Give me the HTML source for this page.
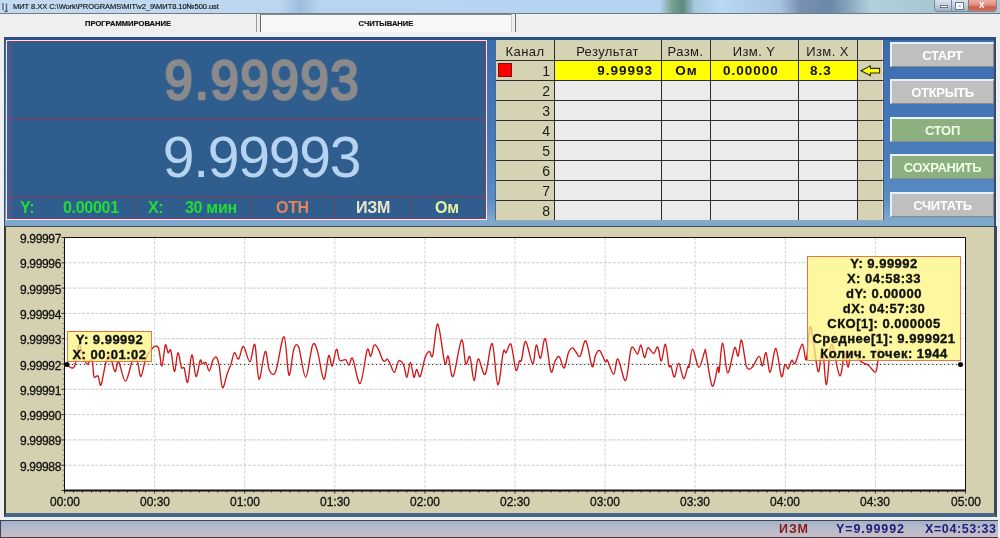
<!DOCTYPE html>
<html><head><meta charset="utf-8">
<style>
*{margin:0;padding:0;box-sizing:border-box}
.a{will-change:transform}
html,body{width:1000px;height:538px;overflow:hidden;background:#eef0ef;font-family:"Liberation Sans",sans-serif;position:relative}
.a{position:absolute}
#title{left:0;top:0;width:1000px;height:14px;background:linear-gradient(90deg,#c4daf0 0%,#bcd6f0 28%,#9cbcdc 30%,#b8d4f0 32%,#b4d4f2 66%,#7aa090 67.2%,#5a8a80 68.3%,#a8c8e0 69.5%,#b8d8f4 72%,#a8c4e0 78%,#7890b0 80%,#6a88a8 83%,#8aa8c0 85%,#b0d0dc 87%,#a8c8d0 93%,#b0c8d8 100%);border-bottom:1px solid #6c7c88}
#title .t{left:13px;top:2px;font-size:7.5px;color:#111;-webkit-text-stroke:0.15px #111;white-space:nowrap;letter-spacing:-0.05px}
#tabs{left:0;top:14px;width:1000px;height:23px;background:#efefef}
.tab{top:0;height:18px;font-size:7.6px;font-weight:bold;color:#111;-webkit-text-stroke:0.2px #111;text-align:center;line-height:19px}
#main{left:4px;top:37px;width:992px;height:190px;background:linear-gradient(180deg,#3a6cb0 0%,#4a7cbc 60%,#5a8cc4 85%,#7ea8cc 96%,#7ea8cc 100%);border-top:3px solid #2a4e86;border-right:2px solid #3a4a6a;border-left:1px solid #3c4c70}
#disp{left:6px;top:40px;width:481px;height:180px;background:#2f5e8e;border:1px solid #f4e8f4;}
#disp .in{left:0;top:0;width:479px;height:178px;border:1px solid #8a3a5a;border-left:5px solid #4a5a8a}
.big1{font-weight:normal;-webkit-text-stroke:2.7px #8c8a8a;font-size:55px;letter-spacing:2px;color:#8c8a8a;text-align:center;width:100%;left:0;transform:scaleX(0.92);transform-origin:262px 0}
.big2{font-size:57px;letter-spacing:-1.2px;color:#b6d4f2;text-align:center;width:100%;left:0}
.info{font-size:16px;letter-spacing:-0.3px;font-weight:bold;top:198px;line-height:20px}
#tbl{left:495px;top:40px;width:389px;height:181px;background:#d6d2b4;border-left:1px solid #4a6a90;border-bottom:1px solid #9aa8b0;border-right:1px solid #505a70;box-shadow:inset -1px 0 0 #e8e8e0}
.hl{background:#2c2c2c;height:1px}
.vl{background:#2c2c2c;width:1px}
.th{font-size:13px;letter-spacing:0.4px;color:#1a1a1a;top:44px;text-align:center}
.rv{font-size:13.5px;letter-spacing:1px;font-weight:bold;color:#111;top:63px}
.rn{font-size:14px;color:#1a1a1a;text-align:right;width:20px}
.btn{left:890px;width:104px;height:25px;background:#bfbfbf;border-top:2px solid #eaf0f8;border-left:2px solid #eaf0f8;border-right:1px solid #8a8a8a;border-bottom:1px solid #8a8a8a;color:#fff;font-weight:bold;font-size:13px;letter-spacing:-0.3px;text-align:center;line-height:23px}
.btn.g{background:#8cb080;color:#f0ffe8}
#chart{left:4px;top:226px;width:993px;height:291px;background:#d4d0b0;border-top:1px solid #404850;border-left:2px solid #3a3a3a;border-right:3px solid #3a4a5a;border-bottom:4px solid #46668c}
#plot{left:64px;top:237px;width:901px;height:253px;background:#fff;border-left:1px solid #000;border-top:1px solid #000;border-right:1px solid #000;border-bottom:2px solid #000}
.yl{font-size:12px;color:#111;text-align:right;width:50px;left:11px;letter-spacing:-0.35px;-webkit-text-stroke:0.3px #111}
.tipb{background:#fdf8a0;border:1px solid #e07848}
.tip{font-size:13px;font-weight:bold;color:#111;text-align:center;line-height:15px;letter-spacing:0.5px;-webkit-text-stroke:0.35px #111}
.xl{font-size:12px;color:#111;text-align:center;width:50px;-webkit-text-stroke:0.3px #111}
#status{left:0;top:520px;width:998px;height:18px;background:linear-gradient(180deg,#a4b2c8 0%,#b8bccc 50%,#cabcc4 100%);border-top:1px solid #3a4458;border-left:1px solid #3a4458;border-bottom:1px solid #4a3a48}
.st{font-weight:bold;font-size:12.5px;top:522px;letter-spacing:0.9px}
</style></head><body>
<div id="title" class="a"><svg class="a" style="left:1px;top:2px" width="10" height="10"><path d="M2 1V8M5.5 1.5V9M3 9.5H7" stroke="#3a4658" stroke-width="1.3" fill="none" opacity="0.8"/></svg><div class="t a">МИТ 8.XX C:\Work\PROGRAMS\МIT\v2_9\МИТ8.10№500.ust</div></div>
<div class="a" style="left:934px;top:0;width:63px;height:12px;border:1px solid #7a8a9a;border-top:none;border-radius:0 0 4px 4px;background:linear-gradient(180deg,#d8e4ee 0%,#c0d0de 50%,#9cb0c2 100%);overflow:hidden">
<div class="a" style="left:16px;top:0;width:1px;height:12px;background:#7a8a9a"></div>
<div class="a" style="left:33px;top:0;width:29px;height:12px;background:linear-gradient(180deg,#eab0a4 0%,#e09080 40%,#d05a48 60%,#d87868 100%);border-left:1px solid #8a7a7a"></div>
<div class="a" style="left:5px;top:5px;width:8px;height:3px;background:#fff;border:1px solid #6a7888"></div>
<div class="a" style="left:21px;top:3px;width:7px;height:6px;border:2px solid #fff;box-shadow:0 0 0 1px #6a7888"></div>
<div class="a" style="left:44px;top:-1px;font-size:10px;font-weight:bold;color:#fff;line-height:12px">x</div>
</div>
<div id="tabs" class="a">
  <div class="tab a" style="left:0;width:257px;border-right:1px solid #9a9a9a">ПРОГРАММИРОВАНИЕ</div>
  <div class="tab a" style="left:260px;width:252px;background:#f8f8f8;border-left:1px solid #6a6a6a;border-right:1px solid #c8c8c8;border-top:1px solid #8a8a8a;line-height:17px">СЧИТЫВАНИЕ</div>
  <div class="a" style="left:515px;top:0;width:1px;height:18px;background:#6a6a6a"></div>
</div>
<div id="main" class="a"></div>
<div id="disp" class="a"><div class="in a"></div></div>
<div class="a" style="left:7px;top:119px;width:479px;height:1px;background:#8a3a5a"></div>
<div class="a" style="left:7px;top:197px;width:479px;height:1px;background:#8a3a5a"></div>
<div class="a" style="left:134px;top:198px;width:1px;height:20px;background:#7a3a60"></div>
<div class="a" style="left:250px;top:198px;width:1px;height:20px;background:#7a3a60"></div>
<div class="a" style="left:334px;top:198px;width:1px;height:20px;background:#7a3a60"></div>
<div class="a" style="left:410px;top:198px;width:1px;height:20px;background:#7a3a60"></div>
<div class="a big1" style="left:1px;top:48px;width:523px;">9.99993</div>
<div class="a big2" style="left:0;top:124px;width:523px;">9.99993</div>
<div class="a info" style="left:20px;color:#22dd33">Y:</div>
<div class="a info" style="left:63px;color:#22dd33">0.00001</div>
<div class="a info" style="left:148px;color:#22dd33">X:</div>
<div class="a info" style="left:185px;color:#22dd33">30 мин</div>
<div class="a info" style="left:276px;color:#e8845c">ОТН</div>
<div class="a info" style="left:356px;color:#efe6c8">ИЗМ</div>
<div class="a info" style="left:435px;color:#e6f0a0">Ом</div>
<div id="tbl" class="a"></div>
<div class="a" style="left:555px;top:61px;width:302px;height:19px;background:#ffff00"></div>
<div class="a" style="left:555px;top:81px;width:302px;height:139px;background:#ebebeb"></div>
<div class="a hl" style="left:496px;top:60px;width:387px"></div>
<div class="a hl" style="left:496px;top:80px;width:387px"></div>
<div class="a hl" style="left:496px;top:100px;width:387px"></div>
<div class="a hl" style="left:496px;top:120px;width:387px"></div>
<div class="a hl" style="left:496px;top:140px;width:387px"></div>
<div class="a hl" style="left:496px;top:160px;width:387px"></div>
<div class="a hl" style="left:496px;top:180px;width:387px"></div>
<div class="a hl" style="left:496px;top:200px;width:387px"></div>
<div class="a vl" style="left:554px;top:40px;height:180px"></div>
<div class="a vl" style="left:661px;top:40px;height:180px"></div>
<div class="a vl" style="left:710px;top:40px;height:180px"></div>
<div class="a vl" style="left:798px;top:40px;height:180px"></div>
<div class="a vl" style="left:857px;top:40px;height:180px"></div>
<div class="a th" style="left:496px;width:58px">Канал</div>
<div class="a th" style="left:554px;width:107px">Результат</div>
<div class="a th" style="left:661px;width:49px">Разм.</div>
<div class="a th" style="left:710px;width:88px">Изм. Y</div>
<div class="a th" style="left:798px;width:59px">Изм. X</div>
<div class="a rn" style="left:530px;top:63px">1</div>
<div class="a rn" style="left:530px;top:83px">2</div>
<div class="a rn" style="left:530px;top:103px">3</div>
<div class="a rn" style="left:530px;top:123px">4</div>
<div class="a rn" style="left:530px;top:143px">5</div>
<div class="a rn" style="left:530px;top:163px">6</div>
<div class="a rn" style="left:530px;top:183px">7</div>
<div class="a rn" style="left:530px;top:203px">8</div>
<div class="a" style="left:498px;top:63px;width:14px;height:14px;background:#ff0000;border:1px solid #801010"></div>
<div class="a rv" style="left:556px;width:97px;text-align:right">9.99993</div>
<div class="a rv" style="left:662px;width:49px;text-align:center">Ом</div>
<div class="a rv" style="left:723px">0.00000</div>
<div class="a rv" style="left:810px">8.3</div>
<svg class="a" style="left:855px;top:58px" width="35" height="24" viewBox="0 0 35 24"><path d="M6 12.7 L15.4 7.8 V10.4 H24.6 V15 H15.4 V17.6 Z" fill="#ffff00" stroke="#2a2a1a" stroke-width="1.1" stroke-linejoin="miter"/></svg>
<div class="a btn" style="top:42px">СТАРТ</div>
<div class="a btn" style="top:79px">ОТКРЫТЬ</div>
<div class="a btn g" style="top:117px">СТОП</div>
<div class="a btn g" style="top:154px">СОХРАНИТЬ</div>
<div class="a btn" style="top:192px">СЧИТАТЬ</div>
<div id="chart" class="a"></div>
<svg class="a" style="left:0;top:0" width="1000" height="538" viewBox="0 0 1000 538">
<rect x="64" y="237" width="901" height="253" fill="#fff"/>
<path d="M64 262.8H965 M64 288.1H965 M64 313.4H965 M64 338.7H965 M64 364.0H965 M64 389.3H965 M64 414.6H965 M64 439.9H965 M64 465.2H965 " stroke="#c8c8c8" stroke-width="1" stroke-dasharray="3 1.5" fill="none"/><path d="M154.6 237V490 M244.7 237V490 M334.8 237V490 M424.9 237V490 M515.0 237V490 M605.1 237V490 M695.2 237V490 M785.3 237V490 M875.4 237V490" stroke="#d4d4d4" stroke-width="1" stroke-dasharray="3 1.5" fill="none"/>
<path d="M61.5 237.5H64 M61.5 262.8H64 M61.5 288.1H64 M61.5 313.4H64 M61.5 338.7H64 M61.5 364.0H64 M61.5 389.3H64 M61.5 414.6H64 M61.5 439.9H64 M61.5 465.2H64 M61.5 490.5H64 M64.5 490V493.5 M73.5 490V492.5 M82.5 490V492.5 M91.5 490V492.5 M100.5 490V492.5 M109.5 490V492.5 M118.6 490V492.5 M127.6 490V492.5 M136.6 490V492.5 M145.6 490V492.5 M154.6 490V493.5 M163.6 490V492.5 M172.6 490V492.5 M181.6 490V492.5 M190.6 490V492.5 M199.6 490V492.5 M208.7 490V492.5 M217.7 490V492.5 M226.7 490V492.5 M235.7 490V492.5 M244.7 490V493.5 M253.7 490V492.5 M262.7 490V492.5 M271.7 490V492.5 M280.7 490V492.5 M289.8 490V492.5 M298.8 490V492.5 M307.8 490V492.5 M316.8 490V492.5 M325.8 490V492.5 M334.8 490V493.5 M343.8 490V492.5 M352.8 490V492.5 M361.8 490V492.5 M370.8 490V492.5 M379.8 490V492.5 M388.9 490V492.5 M397.9 490V492.5 M406.9 490V492.5 M415.9 490V492.5 M424.9 490V493.5 M433.9 490V492.5 M442.9 490V492.5 M451.9 490V492.5 M460.9 490V492.5 M469.9 490V492.5 M479.0 490V492.5 M488.0 490V492.5 M497.0 490V492.5 M506.0 490V492.5 M515.0 490V493.5 M524.0 490V492.5 M533.0 490V492.5 M542.0 490V492.5 M551.0 490V492.5 M560.0 490V492.5 M569.1 490V492.5 M578.1 490V492.5 M587.1 490V492.5 M596.1 490V492.5 M605.1 490V493.5 M614.1 490V492.5 M623.1 490V492.5 M632.1 490V492.5 M641.1 490V492.5 M650.1 490V492.5 M659.2 490V492.5 M668.2 490V492.5 M677.2 490V492.5 M686.2 490V492.5 M695.2 490V493.5 M704.2 490V492.5 M713.2 490V492.5 M722.2 490V492.5 M731.2 490V492.5 M740.2 490V492.5 M749.3 490V492.5 M758.3 490V492.5 M767.3 490V492.5 M776.3 490V492.5 M785.3 490V493.5 M794.3 490V492.5 M803.3 490V492.5 M812.3 490V492.5 M821.3 490V492.5 M830.3 490V492.5 M839.4 490V492.5 M848.4 490V492.5 M857.4 490V492.5 M866.4 490V492.5 M875.4 490V493.5 M884.4 490V492.5 M893.4 490V492.5 M902.4 490V492.5 M911.4 490V492.5 M920.4 490V492.5 M929.5 490V492.5 M938.5 490V492.5 M947.5 490V492.5 M956.5 490V492.5 M965.5 490V493.5" stroke="#303030" stroke-width="1" fill="none"/><path d="M62.5 242.6H64 M62.5 247.6H64 M62.5 252.7H64 M62.5 257.7H64 M62.5 267.9H64 M62.5 272.9H64 M62.5 278.0H64 M62.5 283.0H64 M62.5 293.2H64 M62.5 298.2H64 M62.5 303.3H64 M62.5 308.3H64 M62.5 318.5H64 M62.5 323.5H64 M62.5 328.6H64 M62.5 333.6H64 M62.5 343.8H64 M62.5 348.8H64 M62.5 353.9H64 M62.5 358.9H64 M62.5 369.1H64 M62.5 374.1H64 M62.5 379.2H64 M62.5 384.2H64 M62.5 394.4H64 M62.5 399.4H64 M62.5 404.5H64 M62.5 409.5H64 M62.5 419.7H64 M62.5 424.7H64 M62.5 429.8H64 M62.5 434.8H64 M62.5 445.0H64 M62.5 450.0H64 M62.5 455.1H64 M62.5 460.1H64 M62.5 470.3H64 M62.5 475.3H64 M62.5 480.4H64 M62.5 485.4H64" stroke="#8a8670" stroke-width="1" fill="none"/>
<path d="M64 364.5H961" stroke="#383838" stroke-width="1" stroke-dasharray="1.2 2.8" fill="none"/>
<path d="M64.0 364.0 C64.7 364.3 66.7 365.3 68.0 366.0 C69.3 366.7 70.8 368.2 72.0 368.0 C73.2 367.8 73.8 368.8 75.0 365.0 C76.2 361.2 77.7 346.5 79.0 345.0 C80.3 343.5 81.7 352.8 83.0 356.0 C84.3 359.2 85.5 363.3 87.0 364.0 C88.5 364.7 90.8 357.9 92.0 360.0 C93.2 362.1 93.0 373.8 94.0 376.5 C95.0 379.2 96.8 374.6 98.0 376.0 C99.2 377.4 99.7 387.3 101.0 385.0 C102.3 382.7 104.5 366.8 106.0 362.0 C107.5 357.2 108.5 354.4 110.0 356.0 C111.5 357.6 113.6 370.6 115.0 371.6 C116.4 372.6 116.8 360.2 118.6 361.8 C120.3 363.4 123.2 381.6 125.5 381.4 C127.8 381.2 130.5 363.7 132.5 360.4 C134.5 357.1 136.0 359.1 137.4 361.8 C138.8 364.5 139.5 377.0 140.9 376.5 C142.3 376.0 143.8 363.8 145.8 359.0 C147.8 354.2 150.6 349.8 152.7 347.9 C154.8 346.0 156.9 344.9 158.4 347.9 C159.9 350.9 160.8 366.5 161.9 366.0 C163.1 365.5 164.3 347.3 165.3 345.1 C166.3 342.9 167.2 351.9 168.1 352.8 C169.0 353.7 169.8 347.6 170.9 350.7 C172.0 353.8 173.2 371.2 174.4 371.6 C175.6 372.0 176.7 353.5 177.9 352.8 C179.1 352.1 180.4 364.8 181.4 367.4 C182.4 369.9 183.1 365.7 184.2 368.1 C185.2 370.6 186.4 384.3 187.7 382.1 C189.0 379.9 190.4 355.8 191.8 354.9 C193.2 354.0 194.6 375.6 196.0 376.5 C197.4 377.4 199.1 362.5 200.2 360.4 C201.2 358.3 201.4 363.5 202.3 363.9 C203.2 364.2 204.6 361.3 205.8 362.5 C207.0 363.7 208.1 371.2 209.3 370.9 C210.5 370.5 211.7 362.7 212.8 360.4 C214.0 358.1 215.2 356.3 216.2 357.0 C217.2 357.7 217.9 359.5 219.0 364.6 C220.1 369.7 221.1 386.2 222.5 387.6 C223.9 389.0 226.0 376.8 227.4 373.0 C228.8 369.2 229.7 368.0 230.9 364.6 C232.1 361.2 233.1 353.7 234.4 352.8 C235.7 351.9 237.1 360.1 238.6 359.0 C240.1 357.9 241.5 346.0 243.4 346.5 C245.3 347.0 248.0 362.2 249.9 361.8 C251.8 361.4 253.3 341.5 254.8 344.4 C256.3 347.3 257.3 378.1 259.0 379.3 C260.7 380.5 263.5 352.9 265.2 351.4 C266.9 349.9 267.6 366.8 269.4 370.2 C271.1 373.6 273.3 377.2 275.7 371.6 C278.1 366.0 281.8 336.1 284.0 336.7 C286.2 337.3 287.3 373.0 288.9 375.1 C290.5 377.2 292.2 354.0 293.8 349.3 C295.4 344.6 296.7 342.6 298.7 347.2 C300.7 351.8 303.4 377.5 305.7 377.2 C308.0 376.9 310.6 349.4 312.6 345.1 C314.6 340.8 315.6 345.7 317.5 351.4 C319.4 357.1 321.9 378.6 323.8 379.3 C325.7 380.0 327.3 357.8 328.7 355.6 C330.1 353.4 330.9 367.1 332.2 366.0 C333.5 364.9 335.1 350.2 336.4 349.3 C337.7 348.4 338.3 358.7 339.8 360.4 C341.3 362.1 344.1 358.9 345.6 359.7 C347.2 360.5 347.9 365.5 349.1 365.3 C350.3 365.1 350.8 355.4 352.6 358.4 C354.5 361.4 357.8 384.9 360.2 383.5 C362.6 382.1 365.4 354.5 367.2 350.0 C368.9 345.5 369.5 357.1 370.7 356.3 C371.9 355.5 372.9 346.3 374.2 345.1 C375.5 343.9 377.0 346.9 378.4 349.3 C379.8 351.7 381.4 357.7 382.5 359.7 C383.6 361.7 384.5 361.2 385.3 361.1 C386.1 361.0 386.6 358.5 387.4 359.0 C388.2 359.5 389.0 361.8 390.2 364.0 C391.4 366.2 393.0 372.8 394.4 372.3 C395.8 371.8 397.1 362.4 398.6 361.1 C400.1 359.8 402.1 361.9 403.5 364.6 C404.9 367.3 405.8 377.6 406.9 377.2 C408.0 376.8 409.2 362.5 410.4 362.5 C411.6 362.5 412.8 376.0 413.9 377.2 C414.9 378.4 415.6 369.6 416.7 369.5 C417.8 369.4 418.8 378.5 420.2 376.5 C421.6 374.5 423.6 361.9 425.1 357.7 C426.6 353.5 428.0 351.8 429.3 351.4 C430.6 351.0 431.3 360.2 432.7 355.6 C434.1 351.1 435.8 322.9 437.8 324.1 C439.8 325.4 443.1 357.8 444.8 363.1 C446.5 368.4 446.8 353.9 448.2 356.1 C449.6 358.3 450.9 379.1 453.1 376.4 C455.3 373.7 459.4 342.2 461.5 340.1 C463.6 338.0 464.3 361.0 465.7 363.8 C467.1 366.6 468.5 354.0 469.9 356.8 C471.3 359.6 472.7 380.2 474.1 380.6 C475.5 381.0 476.4 359.9 478.2 358.9 C480.0 357.8 482.9 376.9 485.2 374.3 C487.5 371.8 490.1 341.9 492.2 343.6 C494.3 345.3 495.9 383.3 497.8 384.7 C499.7 386.1 501.9 357.3 503.3 352.0 C504.7 346.7 504.8 354.0 506.1 352.7 C507.4 351.4 509.4 341.4 511.0 344.3 C512.6 347.2 514.5 367.3 515.9 370.1 C517.3 372.9 518.5 362.6 519.4 361.0 C520.3 359.4 520.5 363.6 521.5 360.3 C522.5 357.1 523.9 340.9 525.7 341.5 C527.6 342.1 530.8 363.2 532.6 363.8 C534.4 364.4 535.0 345.9 536.3 345.0 C537.6 344.1 539.0 359.2 540.5 358.2 C542.0 357.1 543.6 336.5 545.3 338.7 C547.0 340.9 549.3 367.8 550.9 371.5 C552.5 375.2 553.7 363.4 555.1 361.0 C556.5 358.6 557.8 355.6 559.3 356.8 C560.8 358.0 562.7 368.7 564.2 368.0 C565.7 367.3 567.0 356.1 568.4 352.7 C569.8 349.3 571.2 347.9 572.5 347.8 C573.8 347.7 574.7 350.6 576.0 352.0 C577.3 353.4 578.6 358.0 580.2 356.1 C581.8 354.2 583.8 339.1 585.8 340.8 C587.8 342.6 590.5 364.2 592.1 366.6 C593.7 369.0 594.2 358.1 595.5 355.4 C596.8 352.7 598.1 349.6 599.7 350.6 C601.3 351.7 604.0 360.1 605.3 361.7 C606.6 363.3 606.0 358.2 607.4 360.3 C608.8 362.4 612.0 374.5 613.7 374.3 C615.5 374.1 615.9 357.8 617.9 358.9 C619.9 359.9 623.4 382.0 625.5 380.6 C627.6 379.2 629.3 356.1 630.6 350.6 C631.9 345.1 632.2 347.2 633.4 347.8 C634.6 348.4 636.3 354.5 637.6 354.0 C638.9 353.5 639.9 344.4 641.0 345.0 C642.1 345.6 643.3 357.0 644.5 357.5 C645.7 358.0 646.5 348.5 648.0 347.8 C649.5 347.1 652.0 353.5 653.6 353.4 C655.2 353.3 656.5 345.8 657.8 347.1 C659.1 348.4 660.0 361.5 661.3 361.0 C662.6 360.5 664.1 343.5 665.4 344.3 C666.7 345.1 668.0 362.3 668.9 365.9 C669.8 369.5 670.1 364.0 671.0 365.9 C671.9 367.8 673.2 377.5 674.5 377.0 C675.8 376.5 677.2 362.9 678.7 363.1 C680.2 363.4 682.1 377.9 683.6 378.5 C685.1 379.1 686.9 368.6 687.8 366.6 C688.7 364.6 688.4 369.5 689.2 366.6 C690.0 363.7 691.0 349.1 692.6 349.2 C694.2 349.3 696.9 366.8 698.9 367.3 C700.9 367.8 703.3 354.4 704.5 352.0 C705.7 349.6 704.6 347.0 705.9 352.7 C707.2 358.4 710.2 383.7 712.2 386.1 C714.2 388.5 716.6 369.7 717.7 367.3 C718.9 364.9 718.3 375.6 719.1 371.5 C719.9 367.4 721.3 342.7 722.7 342.9 C724.1 343.1 725.7 372.1 727.7 372.9 C729.7 373.7 732.9 350.6 734.6 347.8 C736.3 345.0 736.9 357.4 738.1 356.1 C739.3 354.8 740.2 338.4 741.6 340.1 C743.0 341.9 744.8 362.1 746.5 366.6 C748.2 371.1 750.0 369.1 752.1 367.3 C754.2 365.6 757.4 356.3 759.1 356.1 C760.8 355.9 761.4 366.5 762.5 365.9 C763.6 365.3 764.7 351.6 766.0 352.7 C767.3 353.8 768.6 372.9 770.2 372.2 C771.8 371.5 773.9 347.8 775.8 348.5 C777.7 349.2 779.9 373.7 781.4 376.4 C782.9 379.1 783.8 365.8 784.9 364.5 C786.0 363.2 787.1 369.4 788.3 368.7 C789.4 368.0 790.6 361.2 791.8 360.3 C793.0 359.4 793.6 365.8 795.3 363.1 C797.0 360.4 800.4 344.9 802.2 344.3 C804.0 343.7 804.9 362.5 806.3 359.6 C807.7 356.7 808.6 324.9 810.6 326.9 C812.6 328.9 816.2 368.0 818.1 371.5 C820.0 375.0 820.9 345.6 822.3 347.8 C823.7 350.0 825.0 385.3 826.5 384.7 C828.0 384.1 829.2 345.8 831.4 344.3 C833.6 342.8 837.5 374.2 839.7 375.7 C841.9 377.2 843.2 354.8 844.6 353.4 C846.0 352.0 846.9 367.4 848.1 367.3 C849.3 367.2 849.6 353.8 851.6 352.7 C853.6 351.6 857.2 358.9 860.0 361.0 C862.8 363.1 865.6 363.4 868.3 365.2 C871.0 366.9 874.2 374.2 876.0 371.5 C877.8 368.8 878.5 352.8 879.0 349.0" stroke="#d01818" stroke-width="1.35" fill="none" stroke-linejoin="round"/>
<path d="M64.5 237.5H965.5V490M64.5 237V491" stroke="#101010" stroke-width="1" fill="none"/>
<path d="M64 490.5H966" stroke="#101010" stroke-width="2" fill="none"/>
<circle cx="67" cy="364.5" r="2.5" fill="#000"/><circle cx="960.5" cy="364.5" r="2.5" fill="#000"/>

</svg>
<div class="a yl" style="top:232.0px">9.99997</div>
<div class="a yl" style="top:257.3px">9.99996</div>
<div class="a yl" style="top:282.6px">9.99995</div>
<div class="a yl" style="top:307.9px">9.99994</div>
<div class="a yl" style="top:333.2px">9.99993</div>
<div class="a yl" style="top:358.5px">9.99992</div>
<div class="a yl" style="top:383.8px">9.99991</div>
<div class="a yl" style="top:409.1px">9.99990</div>
<div class="a yl" style="top:434.4px">9.99989</div>
<div class="a yl" style="top:459.7px">9.99988</div>
<div class="a xl" style="left:39.5px;top:495px">00:00</div>
<div class="a xl" style="left:129.6px;top:495px">00:30</div>
<div class="a xl" style="left:219.7px;top:495px">01:00</div>
<div class="a xl" style="left:309.8px;top:495px">01:30</div>
<div class="a xl" style="left:399.9px;top:495px">02:00</div>
<div class="a xl" style="left:490.0px;top:495px">02:30</div>
<div class="a xl" style="left:580.1px;top:495px">03:00</div>
<div class="a xl" style="left:670.2px;top:495px">03:30</div>
<div class="a xl" style="left:760.3px;top:495px">04:00</div>
<div class="a xl" style="left:850.4px;top:495px">04:30</div>
<div class="a xl" style="left:940.5px;top:495px">05:00</div>
<div class="a tipb" style="left:67px;top:331px;width:85px;height:31px"></div>
<div class="a tipb" style="left:807px;top:256px;width:154px;height:105px"></div>
<svg class="a" style="left:0;top:0" width="1000" height="538"><defs><clipPath id="tc"><rect x="68" y="332" width="83" height="29"/><rect x="808" y="257" width="152" height="103"/></clipPath></defs><path d="M64.0 364.0 C64.7 364.3 66.7 365.3 68.0 366.0 C69.3 366.7 70.8 368.2 72.0 368.0 C73.2 367.8 73.8 368.8 75.0 365.0 C76.2 361.2 77.7 346.5 79.0 345.0 C80.3 343.5 81.7 352.8 83.0 356.0 C84.3 359.2 85.5 363.3 87.0 364.0 C88.5 364.7 90.8 357.9 92.0 360.0 C93.2 362.1 93.0 373.8 94.0 376.5 C95.0 379.2 96.8 374.6 98.0 376.0 C99.2 377.4 99.7 387.3 101.0 385.0 C102.3 382.7 104.5 366.8 106.0 362.0 C107.5 357.2 108.5 354.4 110.0 356.0 C111.5 357.6 113.6 370.6 115.0 371.6 C116.4 372.6 116.8 360.2 118.6 361.8 C120.3 363.4 123.2 381.6 125.5 381.4 C127.8 381.2 130.5 363.7 132.5 360.4 C134.5 357.1 136.0 359.1 137.4 361.8 C138.8 364.5 139.5 377.0 140.9 376.5 C142.3 376.0 143.8 363.8 145.8 359.0 C147.8 354.2 150.6 349.8 152.7 347.9 C154.8 346.0 156.9 344.9 158.4 347.9 C159.9 350.9 160.8 366.5 161.9 366.0 C163.1 365.5 164.3 347.3 165.3 345.1 C166.3 342.9 167.2 351.9 168.1 352.8 C169.0 353.7 169.8 347.6 170.9 350.7 C172.0 353.8 173.2 371.2 174.4 371.6 C175.6 372.0 176.7 353.5 177.9 352.8 C179.1 352.1 180.4 364.8 181.4 367.4 C182.4 369.9 183.1 365.7 184.2 368.1 C185.2 370.6 186.4 384.3 187.7 382.1 C189.0 379.9 190.4 355.8 191.8 354.9 C193.2 354.0 194.6 375.6 196.0 376.5 C197.4 377.4 199.1 362.5 200.2 360.4 C201.2 358.3 201.4 363.5 202.3 363.9 C203.2 364.2 204.6 361.3 205.8 362.5 C207.0 363.7 208.1 371.2 209.3 370.9 C210.5 370.5 211.7 362.7 212.8 360.4 C214.0 358.1 215.2 356.3 216.2 357.0 C217.2 357.7 217.9 359.5 219.0 364.6 C220.1 369.7 221.1 386.2 222.5 387.6 C223.9 389.0 226.0 376.8 227.4 373.0 C228.8 369.2 229.7 368.0 230.9 364.6 C232.1 361.2 233.1 353.7 234.4 352.8 C235.7 351.9 237.1 360.1 238.6 359.0 C240.1 357.9 241.5 346.0 243.4 346.5 C245.3 347.0 248.0 362.2 249.9 361.8 C251.8 361.4 253.3 341.5 254.8 344.4 C256.3 347.3 257.3 378.1 259.0 379.3 C260.7 380.5 263.5 352.9 265.2 351.4 C266.9 349.9 267.6 366.8 269.4 370.2 C271.1 373.6 273.3 377.2 275.7 371.6 C278.1 366.0 281.8 336.1 284.0 336.7 C286.2 337.3 287.3 373.0 288.9 375.1 C290.5 377.2 292.2 354.0 293.8 349.3 C295.4 344.6 296.7 342.6 298.7 347.2 C300.7 351.8 303.4 377.5 305.7 377.2 C308.0 376.9 310.6 349.4 312.6 345.1 C314.6 340.8 315.6 345.7 317.5 351.4 C319.4 357.1 321.9 378.6 323.8 379.3 C325.7 380.0 327.3 357.8 328.7 355.6 C330.1 353.4 330.9 367.1 332.2 366.0 C333.5 364.9 335.1 350.2 336.4 349.3 C337.7 348.4 338.3 358.7 339.8 360.4 C341.3 362.1 344.1 358.9 345.6 359.7 C347.2 360.5 347.9 365.5 349.1 365.3 C350.3 365.1 350.8 355.4 352.6 358.4 C354.5 361.4 357.8 384.9 360.2 383.5 C362.6 382.1 365.4 354.5 367.2 350.0 C368.9 345.5 369.5 357.1 370.7 356.3 C371.9 355.5 372.9 346.3 374.2 345.1 C375.5 343.9 377.0 346.9 378.4 349.3 C379.8 351.7 381.4 357.7 382.5 359.7 C383.6 361.7 384.5 361.2 385.3 361.1 C386.1 361.0 386.6 358.5 387.4 359.0 C388.2 359.5 389.0 361.8 390.2 364.0 C391.4 366.2 393.0 372.8 394.4 372.3 C395.8 371.8 397.1 362.4 398.6 361.1 C400.1 359.8 402.1 361.9 403.5 364.6 C404.9 367.3 405.8 377.6 406.9 377.2 C408.0 376.8 409.2 362.5 410.4 362.5 C411.6 362.5 412.8 376.0 413.9 377.2 C414.9 378.4 415.6 369.6 416.7 369.5 C417.8 369.4 418.8 378.5 420.2 376.5 C421.6 374.5 423.6 361.9 425.1 357.7 C426.6 353.5 428.0 351.8 429.3 351.4 C430.6 351.0 431.3 360.2 432.7 355.6 C434.1 351.1 435.8 322.9 437.8 324.1 C439.8 325.4 443.1 357.8 444.8 363.1 C446.5 368.4 446.8 353.9 448.2 356.1 C449.6 358.3 450.9 379.1 453.1 376.4 C455.3 373.7 459.4 342.2 461.5 340.1 C463.6 338.0 464.3 361.0 465.7 363.8 C467.1 366.6 468.5 354.0 469.9 356.8 C471.3 359.6 472.7 380.2 474.1 380.6 C475.5 381.0 476.4 359.9 478.2 358.9 C480.0 357.8 482.9 376.9 485.2 374.3 C487.5 371.8 490.1 341.9 492.2 343.6 C494.3 345.3 495.9 383.3 497.8 384.7 C499.7 386.1 501.9 357.3 503.3 352.0 C504.7 346.7 504.8 354.0 506.1 352.7 C507.4 351.4 509.4 341.4 511.0 344.3 C512.6 347.2 514.5 367.3 515.9 370.1 C517.3 372.9 518.5 362.6 519.4 361.0 C520.3 359.4 520.5 363.6 521.5 360.3 C522.5 357.1 523.9 340.9 525.7 341.5 C527.6 342.1 530.8 363.2 532.6 363.8 C534.4 364.4 535.0 345.9 536.3 345.0 C537.6 344.1 539.0 359.2 540.5 358.2 C542.0 357.1 543.6 336.5 545.3 338.7 C547.0 340.9 549.3 367.8 550.9 371.5 C552.5 375.2 553.7 363.4 555.1 361.0 C556.5 358.6 557.8 355.6 559.3 356.8 C560.8 358.0 562.7 368.7 564.2 368.0 C565.7 367.3 567.0 356.1 568.4 352.7 C569.8 349.3 571.2 347.9 572.5 347.8 C573.8 347.7 574.7 350.6 576.0 352.0 C577.3 353.4 578.6 358.0 580.2 356.1 C581.8 354.2 583.8 339.1 585.8 340.8 C587.8 342.6 590.5 364.2 592.1 366.6 C593.7 369.0 594.2 358.1 595.5 355.4 C596.8 352.7 598.1 349.6 599.7 350.6 C601.3 351.7 604.0 360.1 605.3 361.7 C606.6 363.3 606.0 358.2 607.4 360.3 C608.8 362.4 612.0 374.5 613.7 374.3 C615.5 374.1 615.9 357.8 617.9 358.9 C619.9 359.9 623.4 382.0 625.5 380.6 C627.6 379.2 629.3 356.1 630.6 350.6 C631.9 345.1 632.2 347.2 633.4 347.8 C634.6 348.4 636.3 354.5 637.6 354.0 C638.9 353.5 639.9 344.4 641.0 345.0 C642.1 345.6 643.3 357.0 644.5 357.5 C645.7 358.0 646.5 348.5 648.0 347.8 C649.5 347.1 652.0 353.5 653.6 353.4 C655.2 353.3 656.5 345.8 657.8 347.1 C659.1 348.4 660.0 361.5 661.3 361.0 C662.6 360.5 664.1 343.5 665.4 344.3 C666.7 345.1 668.0 362.3 668.9 365.9 C669.8 369.5 670.1 364.0 671.0 365.9 C671.9 367.8 673.2 377.5 674.5 377.0 C675.8 376.5 677.2 362.9 678.7 363.1 C680.2 363.4 682.1 377.9 683.6 378.5 C685.1 379.1 686.9 368.6 687.8 366.6 C688.7 364.6 688.4 369.5 689.2 366.6 C690.0 363.7 691.0 349.1 692.6 349.2 C694.2 349.3 696.9 366.8 698.9 367.3 C700.9 367.8 703.3 354.4 704.5 352.0 C705.7 349.6 704.6 347.0 705.9 352.7 C707.2 358.4 710.2 383.7 712.2 386.1 C714.2 388.5 716.6 369.7 717.7 367.3 C718.9 364.9 718.3 375.6 719.1 371.5 C719.9 367.4 721.3 342.7 722.7 342.9 C724.1 343.1 725.7 372.1 727.7 372.9 C729.7 373.7 732.9 350.6 734.6 347.8 C736.3 345.0 736.9 357.4 738.1 356.1 C739.3 354.8 740.2 338.4 741.6 340.1 C743.0 341.9 744.8 362.1 746.5 366.6 C748.2 371.1 750.0 369.1 752.1 367.3 C754.2 365.6 757.4 356.3 759.1 356.1 C760.8 355.9 761.4 366.5 762.5 365.9 C763.6 365.3 764.7 351.6 766.0 352.7 C767.3 353.8 768.6 372.9 770.2 372.2 C771.8 371.5 773.9 347.8 775.8 348.5 C777.7 349.2 779.9 373.7 781.4 376.4 C782.9 379.1 783.8 365.8 784.9 364.5 C786.0 363.2 787.1 369.4 788.3 368.7 C789.4 368.0 790.6 361.2 791.8 360.3 C793.0 359.4 793.6 365.8 795.3 363.1 C797.0 360.4 800.4 344.9 802.2 344.3 C804.0 343.7 804.9 362.5 806.3 359.6 C807.7 356.7 808.6 324.9 810.6 326.9 C812.6 328.9 816.2 368.0 818.1 371.5 C820.0 375.0 820.9 345.6 822.3 347.8 C823.7 350.0 825.0 385.3 826.5 384.7 C828.0 384.1 829.2 345.8 831.4 344.3 C833.6 342.8 837.5 374.2 839.7 375.7 C841.9 377.2 843.2 354.8 844.6 353.4 C846.0 352.0 846.9 367.4 848.1 367.3 C849.3 367.2 849.6 353.8 851.6 352.7 C853.6 351.6 857.2 358.9 860.0 361.0 C862.8 363.1 865.6 363.4 868.3 365.2 C871.0 366.9 874.2 374.2 876.0 371.5 C877.8 368.8 878.5 352.8 879.0 349.0" stroke="#e05030" stroke-opacity="0.35" stroke-width="1.6" fill="none" clip-path="url(#tc)"/></svg>
<div class="a tip" style="left:67px;top:332px;width:85px;">Y: 9.99992<br>X: 00:01:02</div>
<div class="a tip" style="left:807px;top:256px;width:154px;">Y: 9.99992<br>X: 04:58:33<br>dY: 0.00000<br>dX: 04:57:30<br>СКО[1]: 0.000005<br>Среднее[1]: 9.999921<br>Колич. точек: 1944</div>
<div id="status" class="a"></div>
<div class="a st" style="left:779px;color:#8c1a1a">ИЗМ</div>
<div class="a st" style="left:836px;color:#1c1c78">Y=9.99992</div>
<div class="a st" style="left:925px;color:#1c1c78;letter-spacing:0.6px">X=04:53:33</div>
</body></html>
